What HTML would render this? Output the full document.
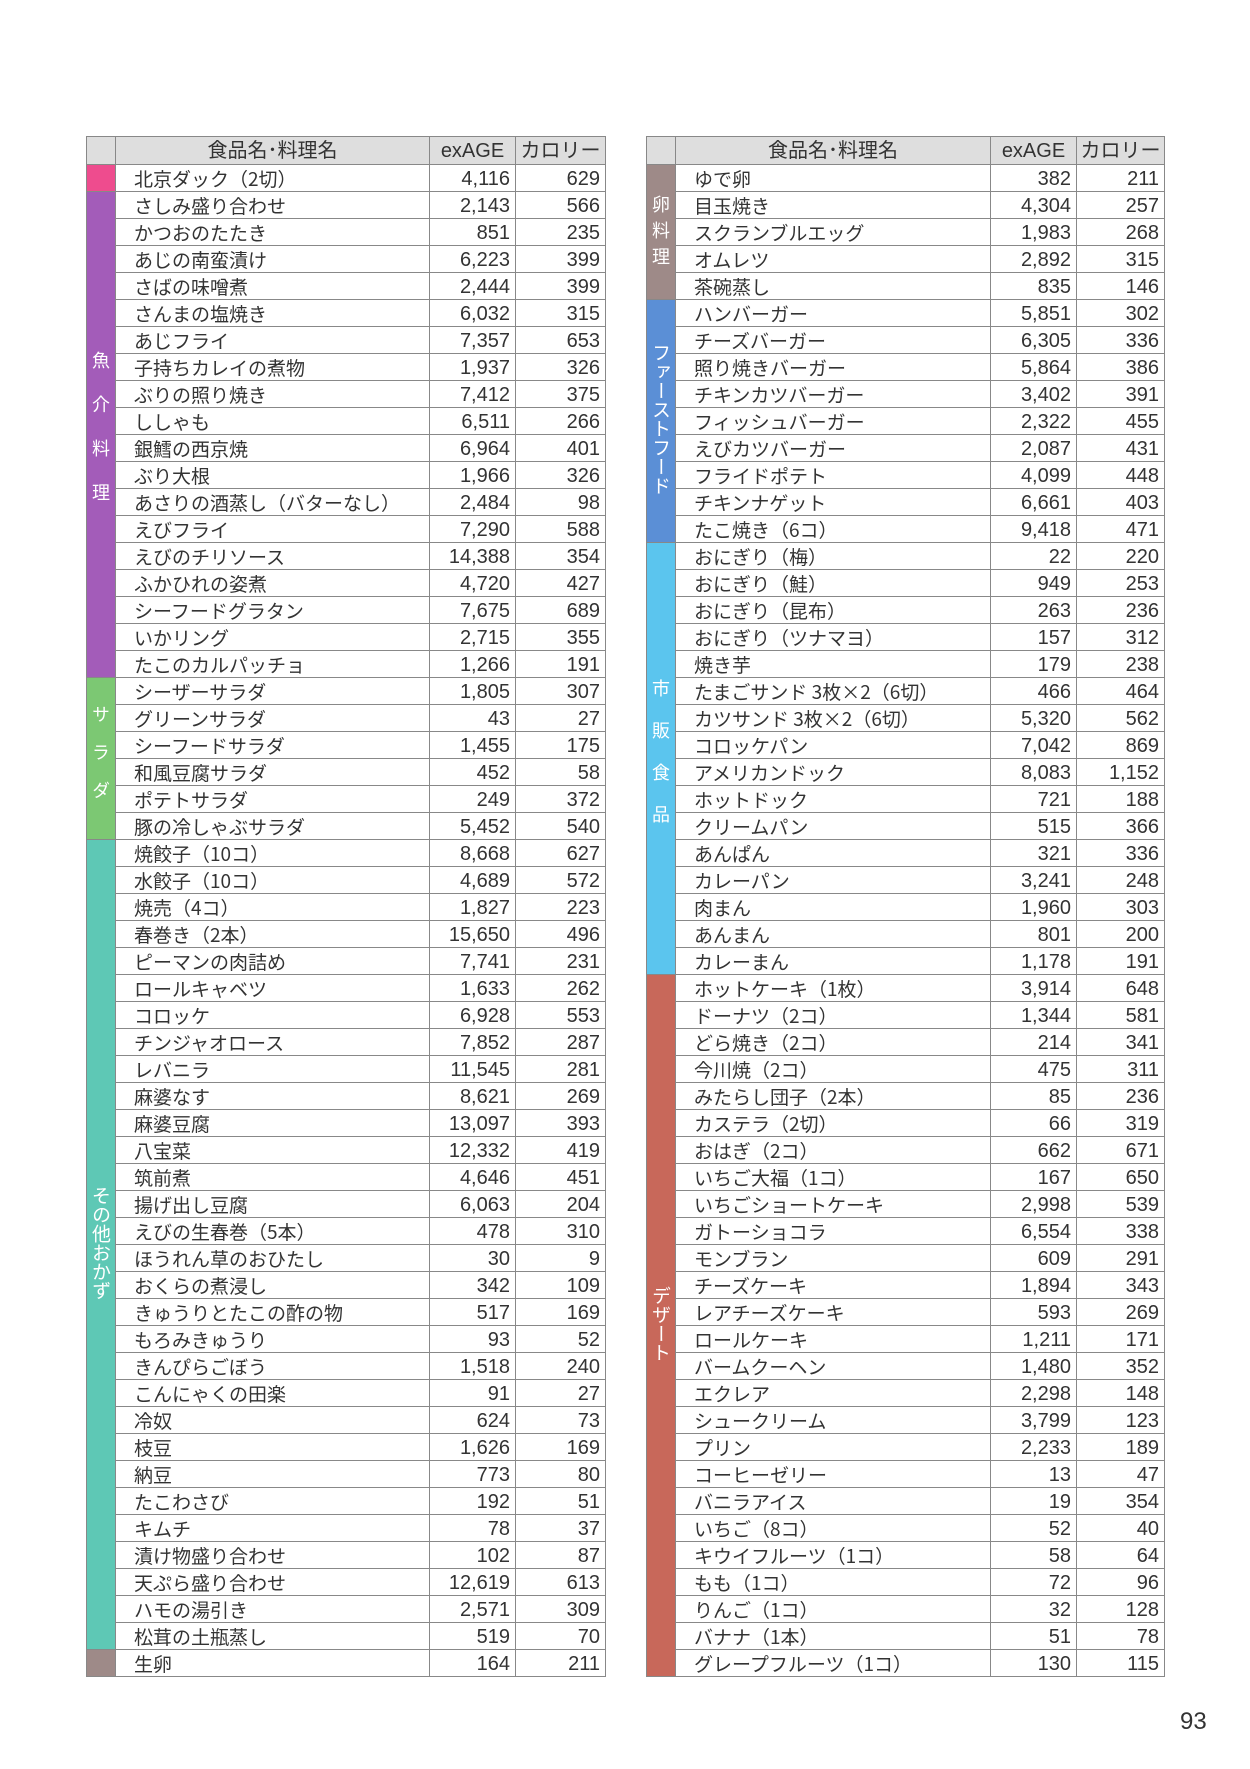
<!DOCTYPE html>
<html><head><meta charset="utf-8">
<style>
html,body{margin:0;padding:0;background:#fff;width:1250px;height:1769px;overflow:hidden}
body{font-family:"Liberation Sans","Noto Sans CJK JP",sans-serif;color:#333;position:relative}
table{position:absolute;top:136px;border-collapse:collapse;table-layout:fixed;font-size:20px;line-height:20px}
td,th{border:1.5px solid #888;padding:0;height:26px;white-space:nowrap;overflow:hidden}
th{background:#dedede;font-weight:normal;height:27px;font-size:20px;color:#333}
td>div{height:26px;line-height:28px;overflow:hidden}
th>div{height:27px;line-height:28px;overflow:hidden}
td.n>div{padding-left:18px;font-family:"Noto Sans CJK JP","Liberation Sans",sans-serif;font-size:19px;line-height:28px}
td.v>div{text-align:right;padding-right:5px}
td.c{color:#fff;text-align:center;vertical-align:middle;padding:0}
td.c span{writing-mode:vertical-rl;font-size:18px;display:inline-block;line-height:28px;font-family:"Noto Sans CJK JP",sans-serif}
.pg{position:absolute;left:1180px;top:1708px;font-size:24px;color:#333}
</style></head><body>
<div id="L"></div>
<script>
function esc(s){return s}
function build(left,w,cols,cats){
 let h='<table style="left:'+left+'px;width:'+w+'px"><colgroup>'+cols.map(c=>'<col style="width:'+c+'px">').join('')+'</colgroup>';
 h+='<tr><th></th><th><div>食品名･料理名</div></th><th><div>exAGE</div></th><th><div>カロリー</div></th></tr>';
 cats.forEach(c=>{
  c.rows.forEach((r,i)=>{
   h+='<tr>';
   if(i==0){h+='<td class="c" rowspan="'+c.rows.length+'" style="background:'+c.bg+'">'+(c.label?'<span style="'+(c.st||'')+'">'+c.label+'</span>':'')+'</td>';}
   h+='<td class="n"><div>'+r[0]+'</div></td><td class="v"><div>'+r[1]+'</div></td><td class="v"><div>'+r[2]+'</div></td></tr>';
  });
 });
 return h+'</table>';
}
function R(s){return s.trim().split('\n').map(l=>l.trim().split('|'))}
const left=[
{bg:'#ee4c8e',rows:R(`北京ダック（2切）|4,116|629`)},
{bg:'#a35cb9',label:'魚介料理',st:'letter-spacing:26px;margin-top:12px',rows:R(`さしみ盛り合わせ|2,143|566
かつおのたたき|851|235
あじの南蛮漬け|6,223|399
さばの味噌煮|2,444|399
さんまの塩焼き|6,032|315
あじフライ|7,357|653
子持ちカレイの煮物|1,937|326
ぶりの照り焼き|7,412|375
ししゃも|6,511|266
銀鱈の西京焼|6,964|401
ぶり大根|1,966|326
あさりの酒蒸し（バターなし）|2,484|98
えびフライ|7,290|588
えびのチリソース|14,388|354
ふかひれの姿煮|4,720|427
シーフードグラタン|7,675|689
いかリング|2,715|355
たこのカルパッチョ|1,266|191`)},
{bg:'#7cc873',label:'サラダ',st:'letter-spacing:20px;margin-top:10px',rows:R(`シーザーサラダ|1,805|307
グリーンサラダ|43|27
シーフードサラダ|1,455|175
和風豆腐サラダ|452|58
ポテトサラダ|249|372
豚の冷しゃぶサラダ|5,452|540`)},
{bg:'#5ec8b5',label:'その他おかず',st:'font-size:19px',rows:R(`焼餃子（10コ）|8,668|627
水餃子（10コ）|4,689|572
焼売（4コ）|1,827|223
春巻き（2本）|15,650|496
ピーマンの肉詰め|7,741|231
ロールキャベツ|1,633|262
コロッケ|6,928|553
チンジャオロース|7,852|287
レバニラ|11,545|281
麻婆なす|8,621|269
麻婆豆腐|13,097|393
八宝菜|12,332|419
筑前煮|4,646|451
揚げ出し豆腐|6,063|204
えびの生春巻（5本）|478|310
ほうれん草のおひたし|30|9
おくらの煮浸し|342|109
きゅうりとたこの酢の物|517|169
もろみきゅうり|93|52
きんぴらごぼう|1,518|240
こんにゃくの田楽|91|27
冷奴|624|73
枝豆|1,626|169
納豆|773|80
たこわさび|192|51
キムチ|78|37
漬け物盛り合わせ|102|87
天ぷら盛り合わせ|12,619|613
ハモの湯引き|2,571|309
松茸の土瓶蒸し|519|70`)},
{bg:'#9e8a88',rows:R(`生卵|164|211`)}];
const right=[
{bg:'#9e8a88',label:'卵料理',st:'letter-spacing:8px;margin-top:8px',rows:R(`ゆで卵|382|211
目玉焼き|4,304|257
スクランブルエッグ|1,983|268
オムレツ|2,892|315
茶碗蒸し|835|146`)},
{bg:'#5b8fd6',label:'ファーストフード',st:'font-size:19px',rows:R(`ハンバーガー|5,851|302
チーズバーガー|6,305|336
照り焼きバーガー|5,864|386
チキンカツバーガー|3,402|391
フィッシュバーガー|2,322|455
えびカツバーガー|2,087|431
フライドポテト|4,099|448
チキンナゲット|6,661|403
たこ焼き（6コ）|9,418|471`)},
{bg:'#5bc5ee',label:'市販食品',st:'letter-spacing:24px;margin-top:12px',rows:R(`おにぎり（梅）|22|220
おにぎり（鮭）|949|253
おにぎり（昆布）|263|236
おにぎり（ツナマヨ）|157|312
焼き芋|179|238
たまごサンド 3枚×2（6切）|466|464
カツサンド 3枚×2（6切）|5,320|562
コロッケパン|7,042|869
アメリカンドック|8,083|1,152
ホットドック|721|188
クリームパン|515|366
あんぱん|321|336
カレーパン|3,241|248
肉まん|1,960|303
あんまん|801|200
カレーまん|1,178|191`)},
{bg:'#c8685a',label:'デザート',st:'font-size:19px',rows:R(`ホットケーキ（1枚）|3,914|648
ドーナツ（2コ）|1,344|581
どら焼き（2コ）|214|341
今川焼（2コ）|475|311
みたらし団子（2本）|85|236
カステラ（2切）|66|319
おはぎ（2コ）|662|671
いちご大福（1コ）|167|650
いちごショートケーキ|2,998|539
ガトーショコラ|6,554|338
モンブラン|609|291
チーズケーキ|1,894|343
レアチーズケーキ|593|269
ロールケーキ|1,211|171
バームクーヘン|1,480|352
エクレア|2,298|148
シュークリーム|3,799|123
プリン|2,233|189
コーヒーゼリー|13|47
バニラアイス|19|354
いちご（8コ）|52|40
キウイフルーツ（1コ）|58|64
もも（1コ）|72|96
りんご（1コ）|32|128
バナナ（1本）|51|78
グレープフルーツ（1コ）|130|115`)}];
document.getElementById('L').innerHTML=build(86,519,[29,314,86,90],left)+build(646,518,[29,315,86,88],right);
</script>
<div class="pg">93</div>
</body></html>
